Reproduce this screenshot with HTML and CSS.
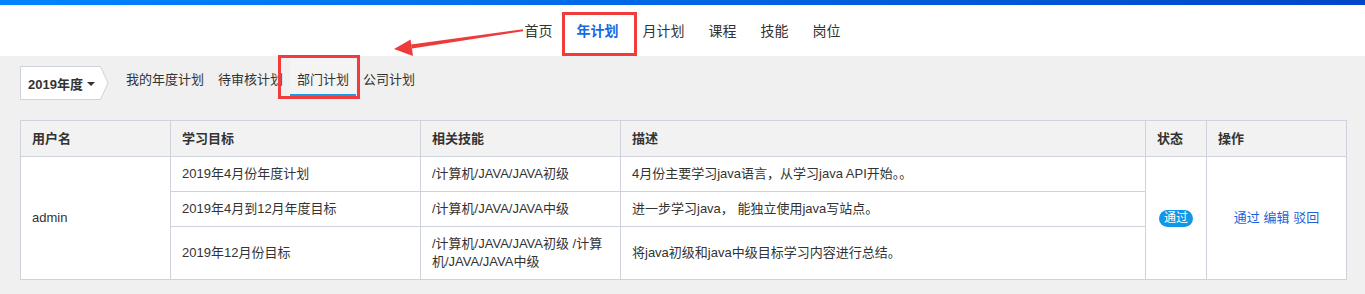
FILE: index.html
```html
<!DOCTYPE html>
<html lang="zh-CN">
<head>
  <meta charset="UTF-8">
  <title>年计划 - 部门计划</title>
  <link rel="stylesheet" href="styles.css">
</head>
<body>
  <div class="topbar"></div>

  <!-- 顶部导航 -->
  <div class="header">
    <ul class="nav">
      <li>首页</li>
      <li class="active">年计划</li>
      <li>月计划</li>
      <li>课程</li>
      <li>技能</li>
      <li>岗位</li>
    </ul>
  </div>

  <!-- 年度选择和标签 -->
  <div class="toolbar">
    <div class="year-select">
      <svg class="year-shape" width="89" height="34" viewBox="0 0 89 34">
        <polygon points="0.5,0.5 80.5,0.5 88,17 80.5,33.5 0.5,33.5" fill="#fff" stroke="#cdd2dc" />
      </svg>
      <span class="year-text">2019年度</span>
      <span class="caret"></span>
    </div>
    <ul class="tabs">
      <li>我的年度计划</li>
      <li>待审核计划</li>
      <li class="active">部门计划</li>
      <li>公司计划</li>
    </ul>
  </div>

  <!-- 计划列表 -->
  <div class="content">
    <table class="plan-table">
      <colgroup>
        <col style="width:150px">
        <col style="width:250px">
        <col style="width:200px">
        <col style="width:525px">
        <col style="width:61px">
        <col style="width:140px">
      </colgroup>
      <thead>
        <tr>
          <th>用户名</th>
          <th>学习目标</th>
          <th>相关技能</th>
          <th>描述</th>
          <th>状态</th>
          <th>操作</th>
        </tr>
      </thead>
      <tbody>
        <tr>
          <td rowspan="3">admin</td>
          <td>2019年4月份年度计划</td>
          <td>/计算机/JAVA/JAVA初级</td>
          <td>4月份主要学习java语言，从学习java API开始。。</td>
          <td rowspan="3" class="status"><span class="badge">通过</span></td>
          <td rowspan="3" class="ops"><a href="#">通过</a> <a href="#">编辑</a> <a href="#">驳回</a></td>
        </tr>
        <tr>
          <td>2019年4月到12月年度目标</td>
          <td>/计算机/JAVA/JAVA中级</td>
          <td>进一步学习java， 能独立使用java写站点。</td>
        </tr>
        <tr class="tall">
          <td>2019年12月份目标</td>
          <td>/计算机/JAVA/JAVA初级 /计算机/JAVA/JAVA中级</td>
          <td>将java初级和java中级目标学习内容进行总结。</td>
        </tr>
      </tbody>
    </table>
  </div>

  <!-- 标注 -->
  <div class="mark mark-nav"></div>
  <div class="mark mark-tab"></div>
  <svg class="arrow" width="1365" height="294" viewBox="0 0 1365 294">
    <polygon points="523,29.2 523,31.2 412,48.6 411,44.4" fill="#ef3a3a" />
    <polygon points="394,49 410.6,39.4 413,56" fill="#ef3a3a" />
  </svg>
</body>
</html>
```

FILE: styles.css
```css
body {
  margin: 0;
  background: #f0f0f0;
  font-family: "Liberation Sans", "Noto Sans CJK SC", sans-serif;
  font-size: 13px;
  color: #333;
}

ul {
  list-style: none;
  margin: 0;
  padding: 0;
}

.topbar {
  height: 5px;
  background: linear-gradient(to right, #0085ff, #0047c9);
}

.header {
  height: 51px;
  background: #fff;
}

.nav {
  display: flex;
  justify-content: center;
  align-items: center;
  height: 100%;
  padding-bottom: 2px;
  box-sizing: border-box;
  font-size: 14px;
}

.nav li {
  padding: 0 12px;
  color: #333;
}

.nav li.active {
  color: #1768e4;
  font-weight: bold;
}

.toolbar {
  display: flex;
  align-items: stretch;
  height: 44px;
  padding: 0 20px;
  margin-bottom: 20px;
}

.year-select {
  position: relative;
  display: flex;
  align-items: center;
  align-self: flex-start;
  width: 89px;
  height: 34px;
  margin-top: 10px;
  padding-left: 8px;
  box-sizing: border-box;
}

.year-shape {
  position: absolute;
  left: 0;
  top: 0;
}

.year-text {
  position: relative;
  font-weight: bold;
  color: #333;
}

.caret {
  position: relative;
  margin-left: 4px;
  margin-top: 1px;
  border-top: 4px solid #333;
  border-left: 4px solid transparent;
  border-right: 4px solid transparent;
}

.tabs {
  display: flex;
  margin-left: 10px;
}

.tabs li {
  display: flex;
  align-items: center;
  padding: 6px 7px 0;
  margin-bottom: 4px;
  border-bottom: 2px solid transparent;
}

.tabs li.active {
  background: #f4f4f4;
  border-bottom-color: #1a9be8;
}

.content {
  padding: 0 19px 0 20px;
}

.plan-table {
  width: 100%;
  table-layout: fixed;
  border-collapse: collapse;
  background: #fff;
}

.plan-table th,
.plan-table td {
  border: 1px solid #cdd2dc;
  padding: 8px 11px;
  line-height: 18px;
  text-align: left;
  font-weight: normal;
}

.plan-table th {
  background: #f2f2f2;
  font-weight: bold;
  padding: 9px 11px 8px;
}

.plan-table .status {
  text-align: center;
  padding: 0;
}

.badge {
  display: inline-block;
  padding: 0 5px;
  height: 17px;
  line-height: 17px;
  border-radius: 9px;
  background: #1296e6;
  color: #fff;
  font-size: 12px;
}

.plan-table .ops {
  text-align: center;
}

.ops a {
  color: #1f5fd8;
  text-decoration: none;
}

.mark {
  position: absolute;
  border: 3px solid #f23b3b;
  box-sizing: border-box;
}

.mark-nav {
  left: 562px;
  top: 12px;
  width: 75px;
  height: 44px;
}

.mark-tab {
  left: 278px;
  top: 55px;
  width: 82px;
  height: 44px;
}

.arrow {
  position: absolute;
  left: 0;
  top: 0;
  pointer-events: none;
}
```
